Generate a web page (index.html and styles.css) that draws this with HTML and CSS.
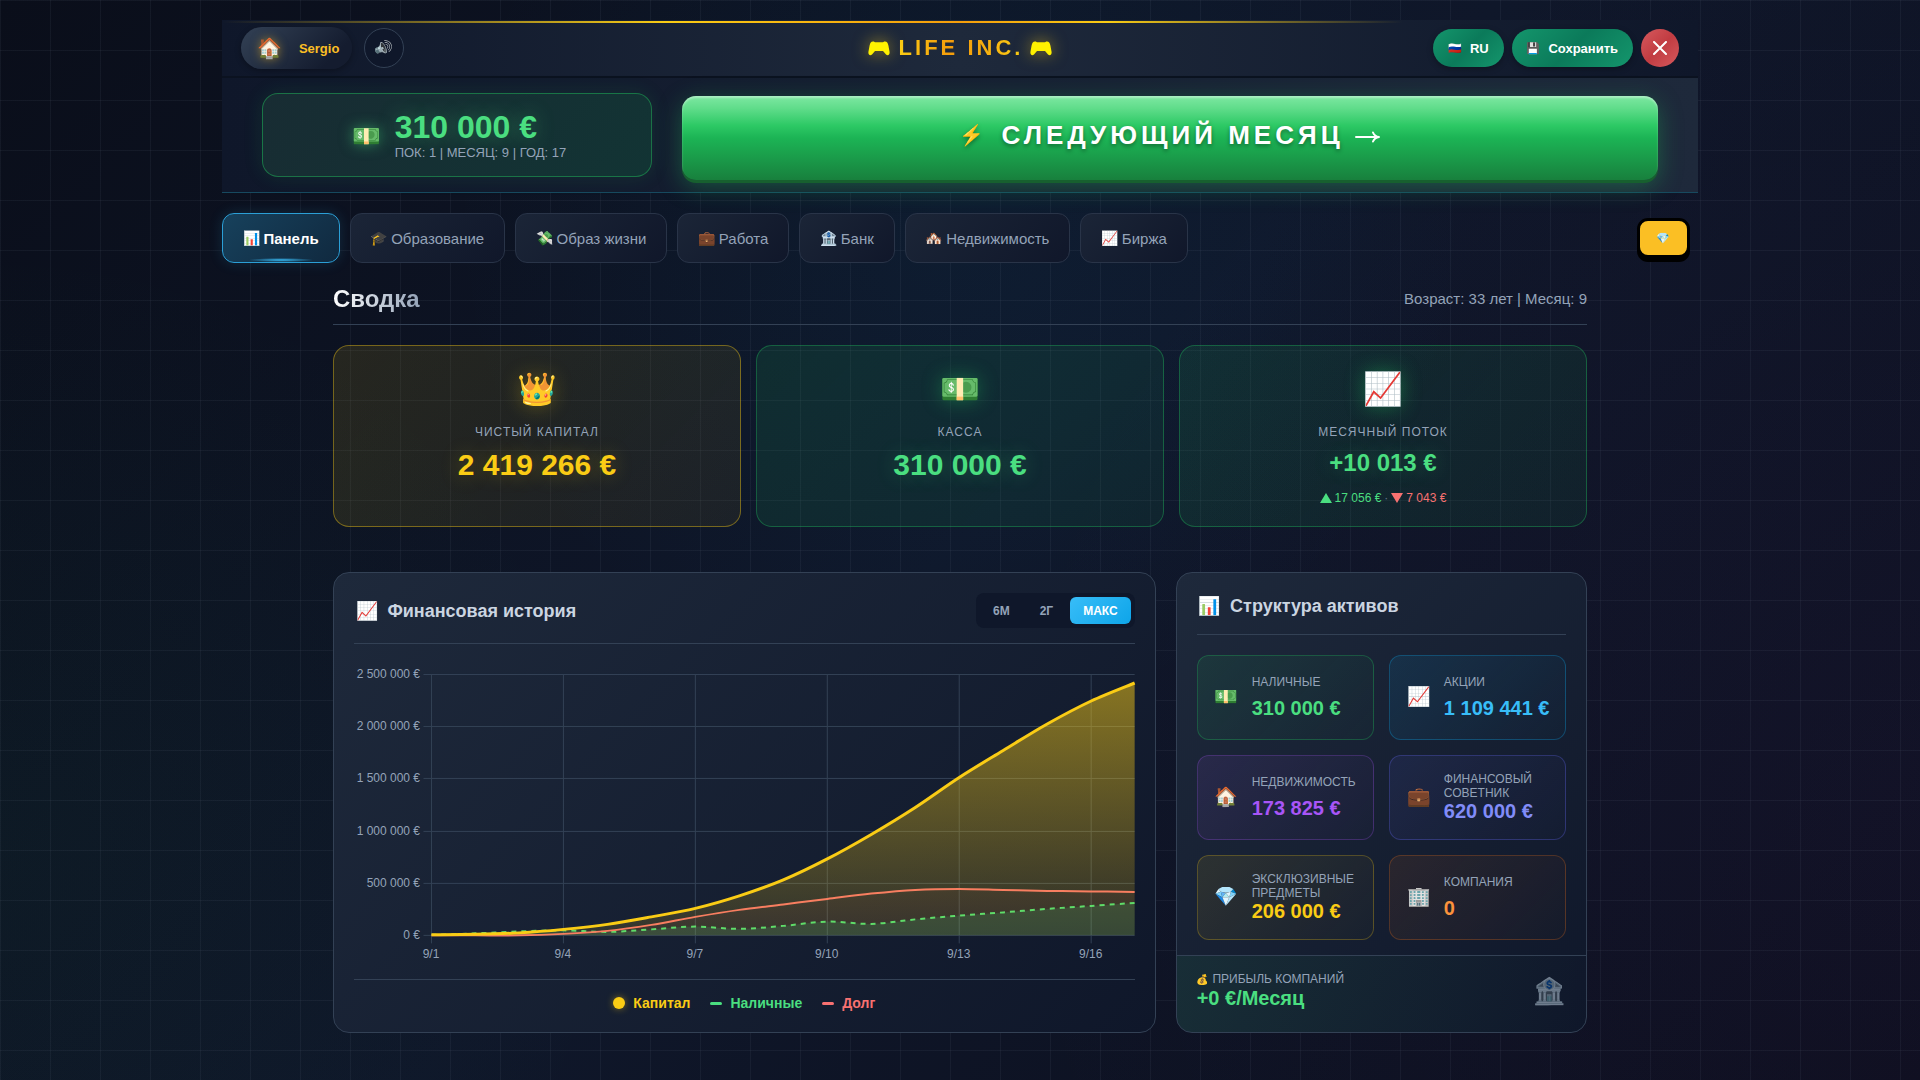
FILE: index.html
```html
<!DOCTYPE html>
<html lang="ru">
<head>
<meta charset="utf-8">
<meta name="viewport" content="width=device-width, initial-scale=1">
<title>Life Inc.</title>
<link rel="stylesheet" href="styles.css">
</head>
<body>
<svg class="defs" aria-hidden="true">
  <symbol id="gamepad" viewBox="0 0 22 16">
    <path d="M5 1.500C3 1.500 2.200 3 1.600 5.500L.4 12c-.4 3 2 4 3.600 2.400L7 11h8l3 3.400c1.600 1.600 4 .6 3.600-2.400l-1.200-6.500C19.800 3 19 1.500 17 1.500c-1.500 0-1.500.8-3 .8H8c-1.500 0-1.500-.8-3-.8z"/>
  </symbol>
</svg>
<div class="app">
  <header class="topbar">
    <div class="topbar-side">
      <button class="player" type="button"><span class="emoji player-icon">🏠</span>Sergio</button>
      <button class="sound" type="button" aria-label="Звук"><span class="emoji">🔊</span></button>
    </div>
    <h1 class="logo">
      <svg class="pad"><use href="#gamepad"/></svg>
      <span class="logo-text">LIFE INC.</span>
      <svg class="pad"><use href="#gamepad"/></svg>
    </h1>
    <div class="topbar-side topbar-end">
      <button class="pill" type="button"><span class="emoji">🇷🇺</span>RU</button>
      <button class="pill" type="button"><span class="emoji">💾</span>Сохранить</button>
      <button class="close" type="button" aria-label="Закрыть">
        <svg viewBox="0 0 14 14"><path d="M1 1l12 12M13 1L1 13"/></svg>
      </button>
    </div>
  </header>

  <section class="turn">
    <div class="purse">
      <span class="emoji purse-icon">💵</span>
      <div>
        <div class="purse-value">310 000 €</div>
        <div class="purse-info">ПОК: 1 | МЕСЯЦ: 9 | ГОД: 17</div>
      </div>
    </div>
    <button class="next" type="button"><span class="emoji next-icon">⚡</span><span>СЛЕДУЮЩИЙ МЕСЯЦ</span>
      <svg class="next-arrow" viewBox="0 0 26 12"><path d="M1 6h23M18 1.500c1 2.500 3 4 6 4.500-3 .5-5 2-6 4.500"/></svg>
    </button>
  </section>

  <nav class="tabs">
    <button class="tab tab-active" type="button"><span class="emoji">📊</span>Панель</button>
    <button class="tab" type="button"><span class="emoji">🎓</span>Образование</button>
    <button class="tab" type="button"><span class="emoji">💸</span>Образ жизни</button>
    <button class="tab" type="button"><span class="emoji">💼</span>Работа</button>
    <button class="tab" type="button"><span class="emoji">🏦</span>Банк</button>
    <button class="tab" type="button"><span class="emoji">🏘️</span>Недвижимость</button>
    <button class="tab" type="button"><span class="emoji">📈</span>Биржа</button>
    <button class="gem" type="button" aria-label="Премиум"><span class="emoji">💎</span></button>
  </nav>

  <main class="content">
    <div class="page-head">
      <h2>Сводка</h2>
      <p>Возраст: 33 лет | Месяц: 9</p>
    </div>

    <section class="stats">
      <article class="stat stat-gold">
        <span class="emoji stat-icon">👑</span>
        <h3>Чистый капитал</h3>
        <p class="stat-value">2 419 266 €</p>
      </article>
      <article class="stat stat-green">
        <span class="emoji stat-icon">💵</span>
        <h3>Касса</h3>
        <p class="stat-value">310 000 €</p>
      </article>
      <article class="stat stat-green">
        <span class="emoji stat-icon">📈</span>
        <h3>Месячный поток</h3>
        <p class="stat-value stat-flow">+10 013 €</p>
        <p class="flow"><span class="up"><i class="tri tri-up"></i>17 056 €</span><span class="dot">·</span><span class="down"><i class="tri tri-down"></i>7 043 €</span></p>
      </article>
    </section>

    <div class="panels">
      <section class="panel history">
        <div class="panel-head">
          <h3><span class="emoji">📈</span>Финансовая история</h3>
          <div class="range">
            <button type="button">6М</button>
            <button type="button">2Г</button>
            <button class="on" type="button">МАКС</button>
          </div>
        </div>
        <svg class="chart" id="chart" viewBox="0 0 781 300" role="img" aria-label="Финансовая история">
          <defs>
            <linearGradient id="gold" x1="0" y1="19" x2="0" y2="271" gradientUnits="userSpaceOnUse">
              <stop offset="0" stop-color="#facc15" stop-opacity=".5"/>
              <stop offset="1" stop-color="#facc15" stop-opacity=".12"/>
            </linearGradient>
          </defs>
          <g id="grid"></g>
          <g id="series"></g>
        </svg>
        <div class="legend">
          <span class="key key-gold">Капитал</span>
          <span class="key key-green">Наличные</span>
          <span class="key key-red">Долг</span>
        </div>
      </section>

      <section class="panel assets">
        <div class="panel-head">
          <h3><span class="emoji">📊</span>Структура активов</h3>
        </div>
        <div class="asset-grid">
          <div class="asset a-green"><span class="emoji">💵</span><div><h4>Наличные</h4><p>310 000 €</p></div></div>
          <div class="asset a-blue"><span class="emoji">📈</span><div><h4>Акции</h4><p>1 109 441 €</p></div></div>
          <div class="asset a-purple"><span class="emoji">🏠</span><div><h4>Недвижимость</h4><p>173 825 €</p></div></div>
          <div class="asset a-indigo"><span class="emoji">💼</span><div class="two"><h4>Финансовый советник</h4><p>620 000 €</p></div></div>
          <div class="asset a-gold"><span class="emoji">💎</span><div class="two"><h4>Эксклюзивные предметы</h4><p>206 000 €</p></div></div>
          <div class="asset a-orange"><span class="emoji">🏢</span><div><h4>Компания</h4><p>0</p></div></div>
        </div>
        <div class="profit">
          <div>
            <h4><span class="emoji">💰</span> Прибыль компаний</h4>
            <p>+0 €/Месяц</p>
          </div>
          <span class="emoji profit-icon">🏦</span>
        </div>
      </section>
    </div>
  </main>
</div>
<script src="chart.js"></script>
</body>
</html>
```
FILE: styles.css
```css
* { box-sizing: border-box; }

body {
  margin: 0;
  min-height: 100vh;
  padding: 20px;
  font-family: "Liberation Sans", Arial, sans-serif;
  color: #94a3b8;
  background:
    repeating-linear-gradient(90deg, rgba(148, 163, 184, .07) 0 1px, transparent 1px 50px),
    repeating-linear-gradient(rgba(148, 163, 184, .07) 0 1px, transparent 1px 50px),
    radial-gradient(circle at 50% 20%, rgba(14, 165, 233, .05), transparent 40%),
    radial-gradient(circle at 0% 80%, rgba(34, 197, 94, .04), transparent 30%),
    radial-gradient(circle at 100% 75%, rgba(168, 85, 247, .04), transparent 45%),
    linear-gradient(135deg, #0a0e1a 0%, #0f172a 50%, #0c0e1c 100%);
}

h1, h2, h3, h4, p { margin: 0; font-weight: 400; }
button { font-family: inherit; cursor: pointer; border: 0; padding: 0; color: inherit; background: none; }
.emoji { font-family: "Noto Color Emoji", sans-serif; font-style: normal; line-height: 1; font-weight: 400; }
.defs { position: absolute; width: 0; height: 0; }

.app { max-width: 1476px; margin: 0 auto; }

/* Top bar */
.topbar {
  display: grid;
  grid-template-columns: 1fr auto 1fr;
  align-items: center;
  height: 58px;
  padding: 0 19px;
  border-bottom: 2px solid #0b1220;
  background:
    linear-gradient(90deg, transparent, #facc15 30%, #f59e0b 50%, #facc15 60%, transparent 80%) 0 1px / 100% 2px no-repeat,
    linear-gradient(90deg, #0f172a, #1e293b 50%, #0f172a);
}
.topbar-side { display: flex; align-items: center; gap: 12px; }
.topbar-end { justify-content: flex-end; gap: 8px; }
.player {
  display: flex; align-items: center; gap: 17px;
  height: 42px; padding: 0 13px 0 16px;
  border-radius: 21px;
  font-size: 13px; font-weight: 700; color: #fbbf24;
  background: linear-gradient(135deg, #334155, #141c2f 80%);
  box-shadow: 0 2px 6px rgba(0, 0, 0, .3);
}
.player-icon { font-size: 20px; text-shadow: 0 0 10px rgba(251, 191, 36, .5); }
.sound {
  width: 40px; height: 40px;
  border: 1px solid #334155; border-radius: 50%;
  background: #0f172a; font-size: 14px;
}
.sound .emoji { display: inline-block; filter: grayscale(.5); transform: rotate(20deg); }
.logo { display: flex; align-items: center; gap: 9px; font-size: 22px; line-height: 32px; }
.logo-text {
  margin-right: -2px;
  font-weight: 700; letter-spacing: 3px;
  color: transparent;
  background: linear-gradient(90deg, #facc15, #f59e0b 40%, #f59e0b 50%, #facc15);
  -webkit-background-clip: text; background-clip: text;
}
.pad { width: 22px; height: 16px; fill: #fff200; filter: drop-shadow(0 0 8px rgba(250, 204, 21, .6)); }
.pill {
  display: flex; align-items: center; gap: 8px;
  height: 38px; padding: 0 15px;
  border-radius: 19px;
  font-size: 13px; font-weight: 700; color: #fff;
  background: linear-gradient(135deg, #14966c, #0b7a5a 50%, #14966c);
  box-shadow: 0 2px 6px rgba(0, 0, 0, .3);
}
.pill .emoji { font-size: 11px; }
.close {
  display: grid; place-items: center;
  width: 38px; height: 38px; border-radius: 50%;
  background: linear-gradient(135deg, #d65a5e, #c23c42 50%, #d65a5e);
}
.close svg { width: 14px; height: 14px; stroke: #fff; stroke-width: 2; stroke-linecap: round; }

/* Turn bar */
.turn {
  display: grid;
  grid-template-columns: 2fr 5fr;
  gap: 30px;
  height: 115px;
  padding: 15px 40px 0;
  border-bottom: 1px solid #17495f;
  background: linear-gradient(90deg, #0f172a, #1e293b);
}
.purse {
  display: flex; align-items: center; justify-content: center; gap: 14px;
  height: 84px; padding: 2px 0 0 4px;
  border: 1px solid rgba(34, 197, 94, .45); border-radius: 16px;
  background: linear-gradient(135deg, #182c33, #123434);
  box-shadow: 0 0 20px rgba(34, 197, 94, .12);
}
.purse-icon { font-size: 23px; text-shadow: 0 0 14px rgba(74, 222, 128, .5); }
.purse-value { font-size: 32px; line-height: 34px; font-weight: 700; color: #4ade80; text-shadow: 0 0 20px rgba(74, 222, 128, .4); }
.purse-info { font-size: 13px; line-height: 18px; }
.next {
  display: flex; align-items: center; justify-content: center; gap: 17px;
  height: 84px; margin-top: 3px; padding-bottom: 6px;
  border-radius: 14px;
  font-size: 26px; font-weight: 700; letter-spacing: 4px; color: #fff;
  text-shadow: 0 2px 4px rgba(0, 0, 0, .4);
  background: linear-gradient(#7ee8a2 0, #5fdc8a 15%, #2dc965 35%, #1cb455 50%, #18803d 100%);
  box-shadow: inset 0 2px 2px rgba(255, 255, 255, .35), 0 3px 0 #17602f, 0 6px 24px rgba(34, 197, 94, .35);
}
.next-icon { font-size: 20px; letter-spacing: 0; }
.next-arrow { width: 26px; height: 12px; margin: 4px 0 0 -6px; fill: none; stroke: #fff; stroke-width: 2; stroke-linecap: round; }

/* Tabs */
.tabs { display: flex; align-items: center; gap: 10px; margin-top: 20px; }
.tab {
  display: flex; align-items: center; gap: 3px;
  height: 50px; padding: 0 20px;
  border: 1px solid #293448; border-radius: 12px;
  font-size: 15px; color: #94a3b8; white-space: nowrap;
  background: linear-gradient(135deg, #1b2537, #10172a);
}
.tab .emoji { font-size: 14px; }
.tab-active {
  color: #fff; font-weight: 700; border-color: #2b9fd6;
  background:
    radial-gradient(ellipse at center, #38bdf8, transparent 70%) 50% 100% / 66px 4px no-repeat,
    linear-gradient(135deg, #17415c, #10293f);
  box-shadow: 0 0 14px rgba(56, 189, 248, .15);
}
.gem {
  width: 53px; height: 40px; margin: 0 8px 0 auto;
  border: 3px solid #000; border-radius: 11px;
  background: #fbbf24; font-size: 11px;
  box-shadow: 0 4px 0 #000;
}

/* Content */
.content { max-width: 1254px; margin: 0 auto; }
.page-head {
  display: flex; align-items: center; justify-content: space-between;
  height: 62px; padding-top: 10px;
  border-bottom: 1px solid #334155;
}
.page-head h2 {
  font-size: 24px; line-height: 28px; font-weight: 700;
  color: transparent;
  background: linear-gradient(90deg, #fff, #94a3b8);
  -webkit-background-clip: text; background-clip: text;
}
.page-head p { font-size: 15px; }

.stats { display: grid; grid-template-columns: repeat(3, 1fr); gap: 15px; margin-top: 20px; }
.stat {
  display: flex; flex-direction: column; align-items: center;
  height: 182px; padding-top: 23px;
  border: 1px solid; border-radius: 16px;
}
.stat-gold { color: #facc15; border-color: rgba(250, 204, 21, .4); background: linear-gradient(135deg, rgba(250, 204, 21, .11), rgba(250, 204, 21, .06)); }
.stat-green { color: #4ade80; border-color: rgba(34, 197, 94, .35); background: linear-gradient(135deg, rgba(34, 197, 94, .12), rgba(34, 197, 94, .07)); }
.stat-icon { font-size: 32px; line-height: 40px; text-shadow: 0 0 20px rgba(34, 197, 94, .4); }
.stat-gold .stat-icon { text-shadow: 0 0 20px rgba(250, 204, 21, .3); }
.stat h3 { margin-top: 16px; font-size: 12px; line-height: 14px; letter-spacing: 1px; text-transform: uppercase; color: #94a3b8; }
.stat-value { margin-top: 8px; font-size: 30px; line-height: 36px; font-weight: 700; text-shadow: 0 0 20px rgba(74, 222, 128, .3); }
.stat-gold .stat-value { text-shadow: 0 0 20px rgba(250, 204, 21, .3); }
.stat-value.stat-flow { font-size: 24px; line-height: 32px; }
.flow { display: flex; align-items: center; gap: 3px; margin-top: 11px; font-size: 12px; line-height: 16px; }
.flow .up, .flow .down { display: flex; align-items: center; gap: 3px; }
.flow .down { color: #f87171; }
.flow .dot { color: #64748b; }
.tri { border: solid transparent; border-width: 0 6px; }
.tri-up { border-bottom: 10px solid #4ade80; }
.tri-down { border-top: 10px solid #f87171; }

.panels { display: grid; grid-template-columns: 2fr 1fr; gap: 20px; margin-top: 45px; }
.panel {
  display: flex; flex-direction: column;
  min-width: 0;
  padding: 20px;
  border: 1px solid #334155; border-radius: 16px;
  background: linear-gradient(135deg, #1e293b, #0f172a);
}
.panel-head {
  display: flex; align-items: center; justify-content: space-between;
  padding-bottom: 15px;
  border-bottom: 1px solid #334155;
}
.panel-head h3 { display: flex; align-items: center; gap: 9px; padding-left: 2px; font-size: 18px; line-height: 26px; font-weight: 700; color: #cbd5e1; }
.panel-head .emoji { font-size: 18px; }
.history { padding-bottom: 5px; }
.range { display: flex; gap: 4px; padding: 4px; border-radius: 8px; background: #0f172a; }
.range button { height: 27px; padding: 0 13px; border-radius: 6px; font-size: 12px; font-weight: 700; color: #94a3b8; }
.range .on { color: #fff; background: linear-gradient(135deg, #38bdf8, #0ea5e9); }

.chart { display: block; width: 100%; margin-top: 20px; font-size: 12px; overflow: visible; }
.chart text { fill: #94a3b8; }
.grid-line { stroke: #334155; stroke-width: 1; }
.line { fill: none; }
.line-capital { stroke: #facc15; stroke-width: 3; }
.line-debt { stroke: #f87e60; stroke-width: 2; }
.line-cash { stroke: #5fdc69; stroke-width: 2; stroke-dasharray: 5 5; }
.area-capital { fill: url(#gold); }
.area-debt { fill: rgba(248, 113, 113, .04); }
.area-cash { fill: rgba(74, 222, 128, .14); }

.legend {
  display: flex; align-items: center; justify-content: center; gap: 20px;
  height: 48px; margin-top: 15px;
  border-top: 1px solid #334155;
  font-size: 14px; font-weight: 700;
}
.key { display: flex; align-items: center; gap: 8px; }
.key::before { content: ""; width: 12px; height: 3px; border-radius: 2px; background: currentColor; box-shadow: 0 0 8px -2px currentColor; }
.key-gold { color: #facc15; }
.key-gold::before { height: 12px; border-radius: 50%; }
.key-green { color: #4ade80; }
.key-red { color: #f87171; }

.assets { padding-bottom: 0; overflow: hidden; }
.asset-grid { display: grid; grid-template-columns: 1fr 1fr; gap: 15px; margin: 20px 0 15px; }
.asset {
  display: grid; grid-template-columns: 24px minmax(0, 1fr); align-items: center; gap: 13px;
  height: 85px; padding: 0 0 2px 17px;
  border: 1px solid; border-radius: 12px;
}
.asset .emoji { font-size: 19px; justify-self: center; }
.asset h4, .profit h4 { font-size: 12px; line-height: 14px; text-transform: uppercase; color: #94a3b8; }
.asset p { margin-top: 8px; font-size: 20px; line-height: 22px; font-weight: 700; white-space: nowrap; }
.asset .two p { margin-top: 0; }
.a-green { border-color: rgba(34, 197, 94, .3); background: linear-gradient(135deg, rgba(34, 197, 94, .1), rgba(34, 197, 94, .02)); }
.a-blue { border-color: rgba(14, 165, 233, .3); background: linear-gradient(135deg, rgba(14, 165, 233, .11), rgba(14, 165, 233, .02)); }
.a-purple { border-color: rgba(168, 85, 247, .25); background: linear-gradient(135deg, rgba(168, 85, 247, .1), rgba(168, 85, 247, .02)); }
.a-indigo { border-color: rgba(99, 102, 241, .3); background: linear-gradient(135deg, rgba(99, 102, 241, .1), rgba(99, 102, 241, .02)); }
.a-gold { border-color: rgba(250, 204, 21, .25); background: linear-gradient(135deg, rgba(250, 204, 21, .09), rgba(250, 204, 21, .02)); }
.a-orange { border-color: rgba(249, 115, 22, .25); background: linear-gradient(135deg, rgba(249, 115, 22, .09), rgba(249, 115, 22, .02)); }
.a-green p { color: #4ade80; }
.a-blue p { color: #38bdf8; }
.a-purple p { color: #a855f7; }
.a-indigo p { color: #818cf8; }
.a-gold p { color: #facc15; }
.a-orange p { color: #fb923c; }

.profit {
  display: flex; align-items: center; justify-content: space-between;
  flex: 1;
  margin: 0 -20px; padding: 0 20px 6px;
  border-top: 1px solid #334155;
  background: linear-gradient(90deg, rgba(34, 197, 94, .08), transparent);
}
.profit .emoji { font-size: 10px; }
.profit p { font-size: 20px; line-height: 24px; font-weight: 700; color: #4ade80; }
.profit .profit-icon { font-size: 26px; opacity: .5; }
```
FILE: chart.js
```js
const NS = "http://www.w3.org/2000/svg";
const grid = document.getElementById("grid");
const series = document.getElementById("series");

function add(parent, tag, attrs, text) {
  const el = document.createElementNS(NS, tag);
  for (const k in attrs) el.setAttribute(k, attrs[k]);
  if (text) el.textContent = text;
  parent.appendChild(el);
}

const left = 77.5, top0 = 10.5, base = 271.5, step = 44;

["2 500 000 €", "2 000 000 €", "1 500 000 €", "1 000 000 €", "500 000 €", "0 €"].forEach((t, i) => {
  const y = Math.round(top0 + i * 52.2 - .5) + .5;
  add(grid, "line", { class: "grid-line", x1: left - 8, x2: 781, y1: y, y2: y });
  add(grid, "text", { x: 66, y: y + 3.5, "text-anchor": "end" }, t);
});
["9/1", "9/4", "9/7", "9/10", "9/13", "9/16"].forEach((t, i) => {
  const x = left + i * 132;
  add(grid, "line", { class: "grid-line", x1: x, x2: x, y1: top0, y2: base + 8 });
  add(grid, "text", { x: x - .5, y: 294, "text-anchor": "middle" }, t);
});

const data = {
  capital: [271, 270.5, 269, 265.5, 260.5, 253, 244.5, 232, 216, 195, 170.5, 143.5, 113.5, 86.5, 60, 37, 19],
  debt: [271.5, 271.5, 271.5, 270, 267, 261, 253, 246, 240.5, 235, 229.7, 226, 225, 226, 227, 227.5, 228],
  cash: [271, 269.5, 267.5, 266.5, 268, 265.5, 262.7, 265, 262, 257.7, 260, 255.5, 251.7, 248.5, 245, 242, 239]
};

function curve(ys) {
  const p = ys.map((y, i) => [Math.min(left + i * step, 781), y]);
  let d = `M${p[0]}`;
  for (let i = 0; i < p.length - 1; i++) {
    const a = p[i - 1] || p[i], b = p[i], c = p[i + 1], e = p[i + 2] || c;
    d += `C${b[0] + (c[0] - a[0]) / 6} ${b[1] + (c[1] - a[1]) / 6} ${c[0] - (e[0] - b[0]) / 6} ${c[1] - (e[1] - b[1]) / 6} ${c[0]} ${c[1]}`;
  }
  return d;
}

for (const name of ["capital", "debt", "cash"]) {
  add(series, "path", { class: `area-${name}`, d: `${curve(data[name])}V${base}H${left}Z` });
}
for (const name of ["cash", "debt", "capital"]) {
  add(series, "path", { class: `line line-${name}`, d: curve(data[name]) });
}
```
